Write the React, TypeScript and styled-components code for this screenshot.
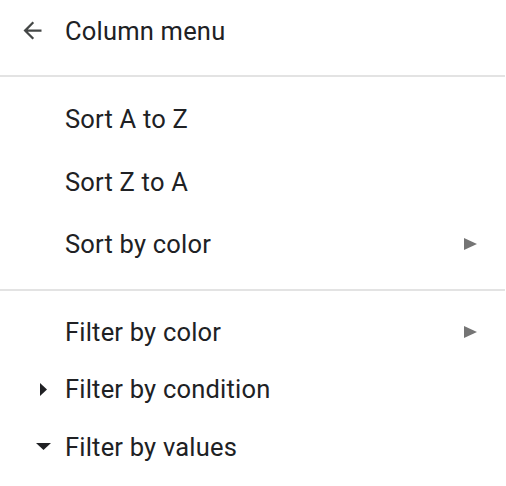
import React from "react";
import styled, { createGlobalStyle } from "styled-components";

const GlobalStyle = createGlobalStyle`
  html, body {
    margin: 0;
    padding: 0;
    background: #ffffff;
  }
  body {
    font-family: Roboto, "Liberation Sans", Arial, sans-serif;
    color: #202124;
  }
`;

const Menu = styled.div`
  width: 506px;
  height: 486px;
  background: #ffffff;
  display: flex;
  flex-direction: column;
  overflow: hidden;
`;

const Header = styled.div`
  display: flex;
  align-items: center;
  height: 61px;
  margin-bottom: 14px;
  padding-left: 19px;
  gap: 19px;
  font-size: 25.5px;
  letter-spacing: 0.2px;
`;

const BackButton = styled.div`
  width: 27px;
  height: 27px;
  display: flex;
  color: #444746;
`;

const Divider = styled.div`
  height: 2px;
  width: 505px;
  background: #e3e3e3;
`;

const Section = styled.div<{ $top: number; $bottom?: number }>`
  display: flex;
  flex-direction: column;
  padding-top: ${(p) => p.$top}px;
  padding-bottom: ${(p) => p.$bottom ?? 0}px;
`;

const Item = styled.div<{ $height: number }>`
  display: grid;
  grid-template-columns: 65px 1fr 42px;
  align-items: center;
  height: ${(p) => p.$height}px;
  font-size: 25.5px;
  letter-spacing: 0.2px;
`;

const Lead = styled.div`
  display: flex;
  align-items: center;
  justify-content: center;
  padding-left: 21px;
`;

const Label = styled.span`
  white-space: nowrap;
`;

const Trail = styled.div`
  display: flex;
  align-items: center;
`;

const ArrowBack = () => (
  <svg width="27" height="27" viewBox="0 0 24 24" fill="currentColor">
    <path d="M20 11H7.83l5.59-5.59L12 4l-8 8 8 8 1.41-1.41L7.83 13H20v-2z" />
  </svg>
);

const SubmenuArrow = () => (
  <svg width="13" height="12" viewBox="0 0 13 12">
    <path d="M0 0 L13 6 L0 12 Z" fill="#757575" />
  </svg>
);

const CaretRight = () => (
  <svg width="7" height="13" viewBox="0 0 7 13">
    <path d="M0 0 L7 6.5 L0 13 Z" fill="#202124" />
  </svg>
);

const CaretDown = () => (
  <svg width="15" height="7" viewBox="0 0 15 7">
    <path d="M0 0 L15 0 L7.5 7 Z" fill="#202124" />
  </svg>
);

type Row = {
  label: string;
  lead?: React.ReactNode;
  submenu?: boolean;
};

const sortRows: Row[] = [
  { label: "Sort A to Z" },
  { label: "Sort Z to A" },
  { label: "Sort by color", submenu: true },
];

const filterRows: Row[] = [
  { label: "Filter by color", submenu: true },
  { label: "Filter by condition", lead: <CaretRight /> },
  { label: "Filter by values", lead: <CaretDown /> },
];

function MenuRow({ row, height }: { row: Row; height: number }) {
  return (
    <Item $height={height}>
      <Lead>{row.lead}</Lead>
      <Label>{row.label}</Label>
      <Trail>{row.submenu && <SubmenuArrow />}</Trail>
    </Item>
  );
}

export default function App() {
  return (
    <>
      <GlobalStyle />
      <Menu>
        <Header>
          <BackButton>
            <ArrowBack />
          </BackButton>
          <Label>Column menu</Label>
        </Header>
        <Divider />
        <Section $top={11} $bottom={13.5}>
          {sortRows.map((r) => (
            <MenuRow key={r.label} row={r} height={62.5} />
          ))}
        </Section>
        <Divider />
        <Section $top={12}>
          {filterRows.map((r) => (
            <MenuRow key={r.label} row={r} height={57.5} />
          ))}
        </Section>
      </Menu>
    </>
  );
}
